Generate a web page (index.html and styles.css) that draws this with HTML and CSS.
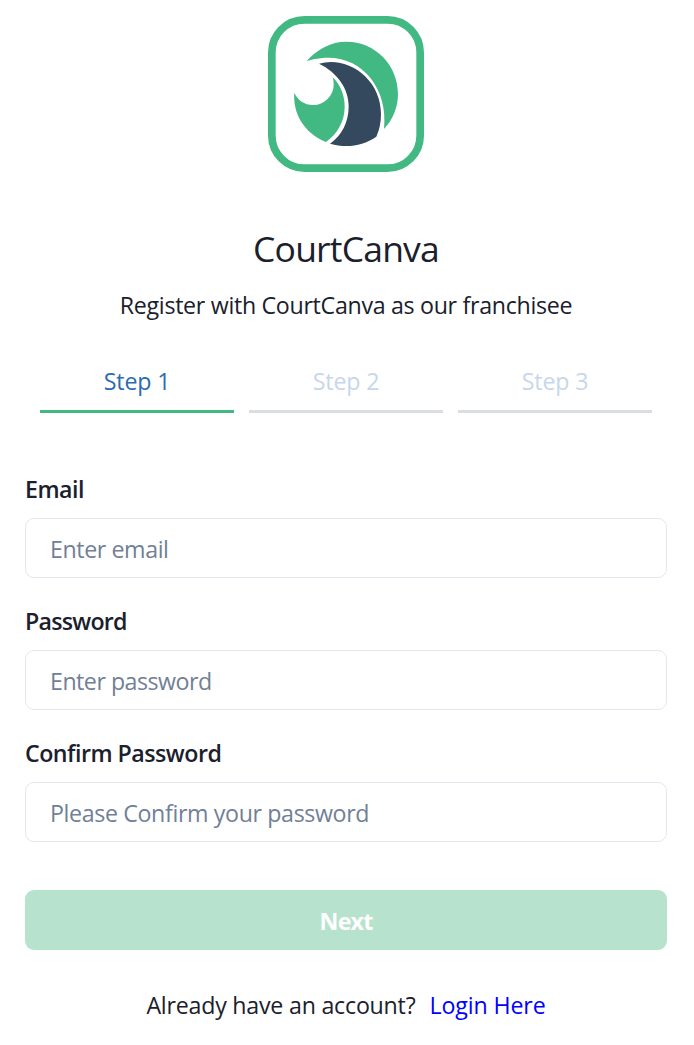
FILE: index.html
```html
<!DOCTYPE html>
<html lang="en">
<head>
<meta charset="utf-8">
<title>CourtCanva</title>
<link rel="stylesheet" href="styles.css">
</head>
<body>
<main class="page">
  <svg class="logo" viewBox="24 18 468 468" role="img" aria-label="CourtCanva logo">
    <rect x="35.5" y="29.5" width="445" height="445" rx="98" fill="#fff" stroke="#42b883" stroke-width="23"/>
    <path fill="#42b883" d="M140 153C172 117 213 95 259 95C346 95 414 165 414 252C414 291 399 329 372 357C386 231 299 130 182 145Q160 147 140 153Z"/>
    <path fill="#35495e" d="M177 161C267 137 363 209 363 312Q363 350 349 380C308 408 260 415 210 401C246 375 266 337 266 288C266 236 232 187 177 161Z"/>
    <path fill="#42b883" d="M103 248C113 270 133 285 159 285C193 285 221 257 221 224Q221 213 218 202C242 226 254 256 254 291C254 334 232 372 198 396C133 369 98 311 103 248Z"/>
  </svg>
  <h1 class="title">CourtCanva</h1>
  <p class="subtitle">Register with CourtCanva as our franchisee</p>
  <ol class="steps">
    <li class="step step-active">Step 1</li>
    <li class="step">Step 2</li>
    <li class="step">Step 3</li>
  </ol>
  <form class="form">
    <div class="field">
      <label class="label label-email" for="email">Email</label>
      <input class="input input-email" id="email" type="email" placeholder="Enter email">
    </div>
    <div class="field">
      <label class="label label-password" for="password">Password</label>
      <input class="input input-password" id="password" type="password" placeholder="Enter password">
    </div>
    <div class="field">
      <label class="label label-confirm" for="confirm">Confirm Password</label>
      <input class="input input-confirm" id="confirm" type="password" placeholder="Please Confirm your password">
    </div>
    <button class="next" type="button" disabled>Next</button>
  </form>
  <p class="login"><span class="question">Already have an account?</span><a class="link" href="#">Login Here</a></p>
</main>
</body>
</html>
```
FILE: styles.css
```css
* { box-sizing: border-box; margin: 0; padding: 0; }
body {
  background: #fff;
  color: #1a202c;
  font-family: "Segoe UI", "Open Sans", "Noto Sans", sans-serif;
  font-size: 23.2px;
  font-weight: 400;
  line-height: 36px;
}
.page { display: flex; flex-direction: column; padding: 16px 27px 0 25px; }
.logo { display: block; width: 156px; height: 156px; align-self: center; }
.title {
  margin-top: 49px;
  font-size: 35.5px;
  font-weight: 400;
  line-height: 54px;
  letter-spacing: -0.8px;
  text-align: center;
}
.subtitle { margin-top: 12px; text-align: center; white-space: nowrap; letter-spacing: -0.3px; }
.steps {
  display: grid;
  grid-template-columns: repeat(3, 1fr);
  gap: 15px;
  margin-top: 37px;
  padding: 0 15px;
  list-style: none;
}
.step {
  height: 53px;
  padding-top: 3px;
  border-bottom: 3px solid #dadde4;
  color: #c7d7ea;
  letter-spacing: -0.15px;
  text-align: center;
}
.step-active { border-color: #42b883; color: #2b6cb0; }
.form { display: flex; flex-direction: column; margin-top: 58px; }
.field { display: flex; flex-direction: column; height: 132px; }
.label { align-self: flex-start; height: 47px; font-weight: 600; white-space: nowrap; }
.label-email { letter-spacing: -0.5px; }
.label-password { letter-spacing: -0.75px; }
.label-confirm { letter-spacing: -0.5px; }
.input {
  width: 100%;
  height: 60px;
  padding: 1px 24px 0;
  border: 1px solid #e2e8f0;
  border-radius: 9px;
  background: #fff;
  color: #1a202c;
  font: inherit;
}
.input-email { letter-spacing: -0.4px; }
.input-password { letter-spacing: -0.5px; }
.input-confirm { letter-spacing: -0.36px; }
.input::placeholder { color: #718096; opacity: 1; }
.next {
  height: 60px;
  margin-top: 23px;
  padding-top: 2px;
  border: 0;
  border-radius: 9px;
  background: #b7e3ce;
  color: #fff;
  font: inherit;
  font-weight: 700;
  letter-spacing: -0.8px;
}
.login { display: flex; justify-content: center; gap: 14px; margin-top: 37px; white-space: nowrap; }
.question { letter-spacing: -0.22px; }
.link { color: #00f; text-decoration: none; letter-spacing: -0.12px; }
```
